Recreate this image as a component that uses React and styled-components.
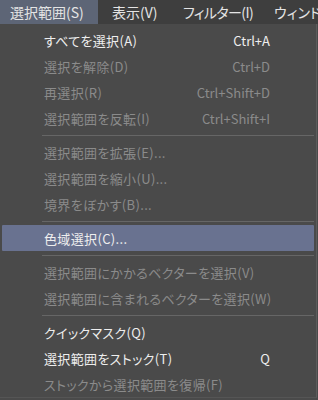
import styled, { createGlobalStyle } from "styled-components";

const GlobalStyle = createGlobalStyle`
  html, body {
    margin: 0;
    padding: 0;
    background: #4a4a4a;
  }
  body {
    font-family: "Noto Sans CJK JP", "Noto Sans", sans-serif;
    font-feature-settings: "palt";
  }
`;

const Screen = styled.div`
  width: 318px;
  height: 400px;
  overflow: hidden;
  background: #4a4a4a;
`;

const MenuBar = styled.div`
  display: flex;
  height: 24px;
  background: #3e3e3e;
  overflow: hidden;
`;

const Tab = styled.div`
  display: flex;
  align-items: center;
  flex: none;
  width: ${({ $width }) => $width}px;
  padding-left: ${({ $pad }) => $pad}px;
  box-sizing: border-box;
  font-size: 14px;
  letter-spacing: ${({ $tight }) => ($tight ? "-0.6px" : "0")};
  color: #e4e4e4;
  white-space: nowrap;
  background: ${({ $active }) => ($active ? "#5d6576" : "transparent")};
`;

const Panel = styled.div`
  width: 317px;
  height: 374px;
  padding-top: 3px;
  box-sizing: border-box;
  background: #4a4a4a;
  border-right: 1px solid #5c5c5c;
  border-bottom: 1px solid #555555;
  display: flex;
  flex-direction: column;
`;

const Item = styled.div`
  display: flex;
  align-items: center;
  justify-content: space-between;
  height: 26px;
  flex: none;
  margin: 0 ${({ $hover }) => ($hover ? "2px" : "0")};
  padding: 0 46px 0 ${({ $hover }) => ($hover ? "42px" : "44px")};
  font-size: 13px;
  letter-spacing: 0.35px;
  color: ${({ $disabled }) => ($disabled ? "#8b8b8b" : "#eeeeee")};
  background: ${({ $hover }) => ($hover ? "#697290" : "transparent")};
  border-radius: 1px;
  white-space: nowrap;
`;

const Shortcut = styled.span`
  font-size: 13px;
  letter-spacing: 0;
`;

const Separator = styled.div`
  flex: none;
  height: 8px;
  display: flex;
  align-items: center;
  padding-left: 42px;
  padding-right: 2px;

  &::after {
    content: "";
    flex: 1;
    height: 1px;
    background: #666666;
  }
`;

const tabs = [
  { label: "選択範囲(S)", width: 98, pad: 10, active: true },
  { label: "表示(V)", width: 73, pad: 14 },
  { label: "フィルター(I)", width: 89, pad: 12, tight: true },
  { label: "ウィンドウ(W)", width: 80, pad: 14 },
];

const menu = [
  { label: "すべてを選択(A)", shortcut: "Ctrl+A" },
  { label: "選択を解除(D)", shortcut: "Ctrl+D", disabled: true },
  { label: "再選択(R)", shortcut: "Ctrl+Shift+D", disabled: true },
  { label: "選択範囲を反転(I)", shortcut: "Ctrl+Shift+I", disabled: true },
  "sep",
  { label: "選択範囲を拡張(E)...", disabled: true },
  { label: "選択範囲を縮小(U)...", disabled: true },
  { label: "境界をぼかす(B)...", disabled: true },
  "sep",
  { label: "色域選択(C)...", hover: true },
  "sep",
  { label: "選択範囲にかかるベクターを選択(V)", disabled: true },
  { label: "選択範囲に含まれるベクターを選択(W)", disabled: true },
  "sep",
  { label: "クイックマスク(Q)" },
  { label: "選択範囲をストック(T)", shortcut: "Q" },
  { label: "ストックから選択範囲を復帰(F)", disabled: true },
];

export default function App() {
  return (
    <Screen>
      <GlobalStyle />
      <MenuBar>
        {tabs.map((t) => (
          <Tab
            key={t.label}
            $width={t.width}
            $pad={t.pad}
            $active={t.active}
            $tight={t.tight}
          >
            {t.label}
          </Tab>
        ))}
      </MenuBar>
      <Panel>
        {menu.map((m, i) =>
          m === "sep" ? (
            <Separator key={i} />
          ) : (
            <Item key={i} $disabled={m.disabled} $hover={m.hover}>
              <span>{m.label}</span>
              {m.shortcut && <Shortcut>{m.shortcut}</Shortcut>}
            </Item>
          )
        )}
      </Panel>
    </Screen>
  );
}
